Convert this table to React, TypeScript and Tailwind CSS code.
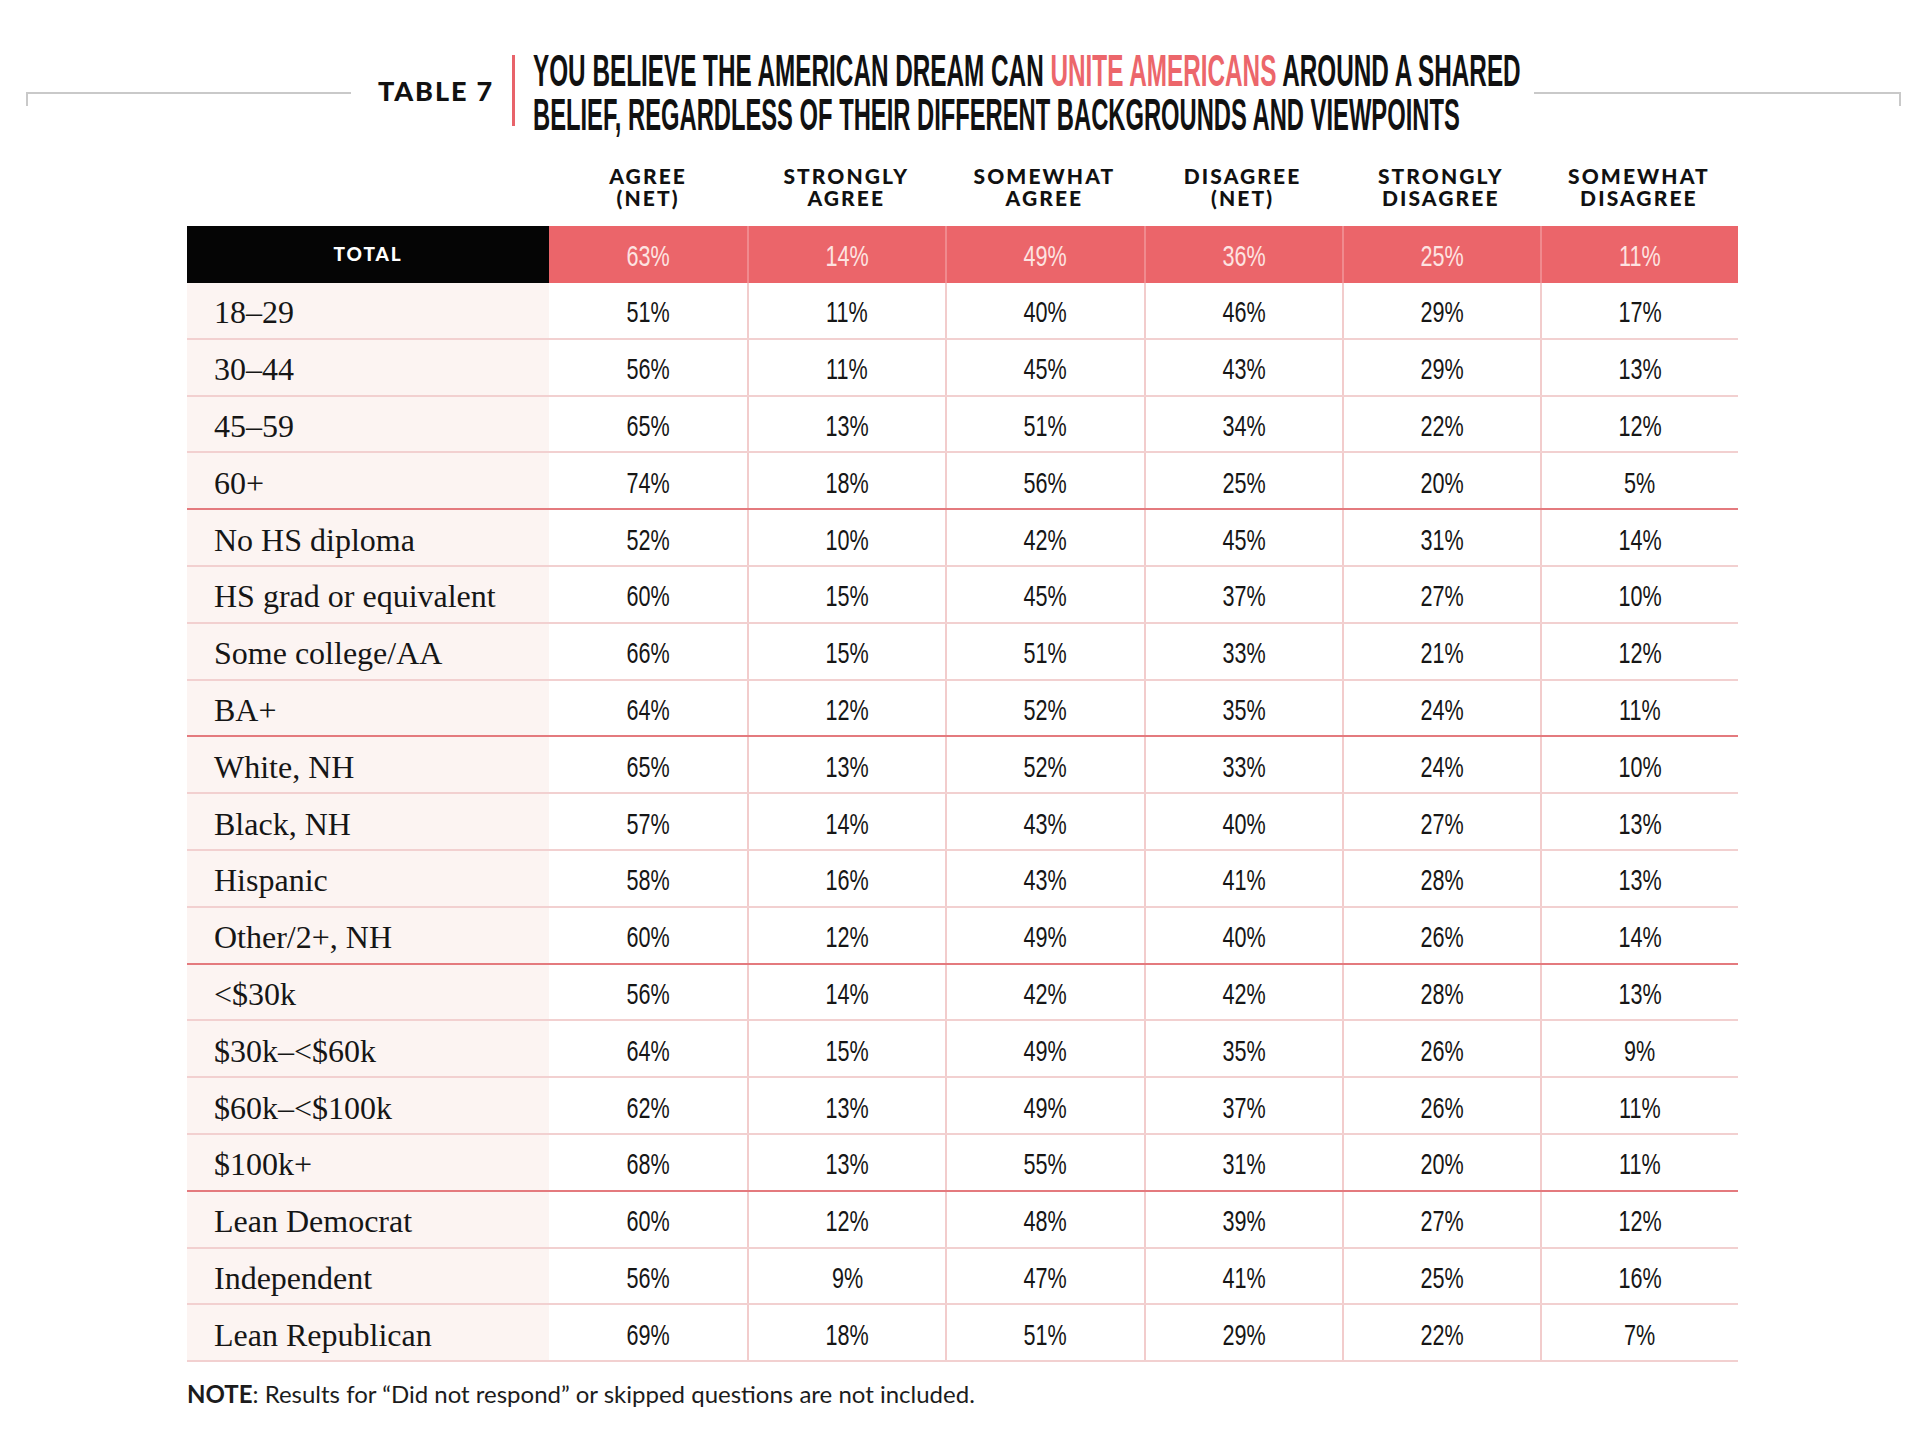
import React from 'react';

type Row = { label: string; values: number[]; groupEnd?: boolean };

const columns = [
  ['AGREE', '(NET)'],
  ['STRONGLY', 'AGREE'],
  ['SOMEWHAT', 'AGREE'],
  ['DISAGREE', '(NET)'],
  ['STRONGLY', 'DISAGREE'],
  ['SOMEWHAT', 'DISAGREE'],
];

const total = [63, 14, 49, 36, 25, 11];

const rows: Row[] = [
  { label: '18–29', values: [51, 11, 40, 46, 29, 17] },
  { label: '30–44', values: [56, 11, 45, 43, 29, 13] },
  { label: '45–59', values: [65, 13, 51, 34, 22, 12] },
  { label: '60+', values: [74, 18, 56, 25, 20, 5], groupEnd: true },
  { label: 'No HS diploma', values: [52, 10, 42, 45, 31, 14] },
  { label: 'HS grad or equivalent', values: [60, 15, 45, 37, 27, 10] },
  { label: 'Some college/AA', values: [66, 15, 51, 33, 21, 12] },
  { label: 'BA+', values: [64, 12, 52, 35, 24, 11], groupEnd: true },
  { label: 'White, NH', values: [65, 13, 52, 33, 24, 10] },
  { label: 'Black, NH', values: [57, 14, 43, 40, 27, 13] },
  { label: 'Hispanic', values: [58, 16, 43, 41, 28, 13] },
  { label: 'Other/2+, NH', values: [60, 12, 49, 40, 26, 14], groupEnd: true },
  { label: '<$30k', values: [56, 14, 42, 42, 28, 13] },
  { label: '$30k–<$60k', values: [64, 15, 49, 35, 26, 9] },
  { label: '$60k–<$100k', values: [62, 13, 49, 37, 26, 11] },
  { label: '$100k+', values: [68, 13, 55, 31, 20, 11], groupEnd: true },
  { label: 'Lean Democrat', values: [60, 12, 48, 39, 27, 12] },
  { label: 'Independent', values: [56, 9, 47, 41, 25, 16] },
  { label: 'Lean Republican', values: [69, 18, 51, 29, 22, 7] },
];

// condensed numerals: Arial metrics squeezed horizontally
const Num: React.FC<{ v: number; light?: boolean }> = ({ v, light }) => (
  <span
    className={`inline-block origin-center scale-x-[0.72] font-['Liberation_Sans',sans-serif] text-[30px] leading-none ${
      light ? 'text-[#fde3e1]' : 'text-[#161616]'
    }`}
  >
    {v}%
  </span>
);

const App: React.FC = () => {
  return (
    <div className="w-[1920px] min-h-[1455px] bg-white">
      {/* Title */}
      <div className="flex items-start pt-[50px]">
        <div className="ml-[26px] mt-[42px] w-[325px] h-[14px] border-t-2 border-l-2 border-[#c9c9c9]" />
        <div className="ml-[27px] mt-[26px] w-[115px] whitespace-nowrap font-['Lato',sans-serif] font-black text-[27px] leading-[30px] tracking-[0.07em] text-[#111]">
          TABLE 7
        </div>
        <div className="ml-[19px] mt-[5px] w-[3px] h-[71px] bg-[#e8636a]" />
        {/* tall compressed headline: small type stretched vertically */}
        <div className="ml-[18px] w-[988px] whitespace-nowrap font-['Liberation_Sans',sans-serif] font-bold text-[#111]">
          <div className="h-[43px]">
            <div className="origin-top scale-y-[1.81] text-[24.3px] leading-[24px]">
              YOU BELIEVE THE AMERICAN DREAM CAN <span className="text-[#ec666b]">UNITE AMERICANS</span> AROUND A SHARED
            </div>
          </div>
          <div className="h-[43px]">
            <div className="origin-top scale-y-[1.85] text-[23.76px] leading-[24px]">
              BELIEF, REGARDLESS OF THEIR DIFFERENT BACKGROUNDS AND VIEWPOINTS
            </div>
          </div>
        </div>
        <div className="ml-[13px] mr-[19px] mt-[42px] flex-1 h-[14px] border-t-2 border-r-2 border-[#c9c9c9]" />
      </div>

      {/* Table */}
      <div className="ml-[187px] w-[1551px]">
        <div className="mt-[29px] mb-[17px] grid grid-cols-[362px_repeat(6,1fr)]">
          <div />
          {columns.map((c, i) => (
            <div
              key={i}
              className="text-center font-['Lato',sans-serif] font-black text-[21px] leading-[22px] tracking-[0.1em] text-[#111]"
            >
              <div>{c[0]}</div>
              <div>{c[1]}</div>
            </div>
          ))}
        </div>

        {/* total row */}
        <div className="grid grid-cols-[362px_repeat(6,1fr)] h-[57px]">
          <div className="bg-[#050505] flex items-center justify-center font-['Lato',sans-serif] font-black text-[19px] tracking-[0.1em] text-white">
            TOTAL
          </div>
          {total.map((v, i) => (
            <div
              key={i}
              className={`bg-[#eb656a] flex items-center justify-center pt-[3px] ${i > 0 ? 'border-l-2 border-[#f08a8e]' : ''}`}
            >
              <Num v={v} light />
            </div>
          ))}
        </div>

        {rows.map((r) => (
          <div
            key={r.label}
            className={`grid grid-cols-[362px_repeat(6,1fr)] h-[56.8px] border-b-2 ${
              r.groupEnd ? 'border-[#e47a7e]' : 'border-[#f2d0d0]'
            }`}
          >
            <div className="bg-[#fcf4f2] flex items-center pl-[27px] pt-[4px] font-['Liberation_Serif',serif] text-[32px] text-[#161616]">
              {r.label}
            </div>
            {r.values.map((v, i) => (
              <div
                key={i}
                className={`bg-white flex items-center justify-center pt-[4px] ${i > 0 ? 'border-l-2 border-[#f2cccc]' : ''}`}
              >
                <Num v={v} />
              </div>
            ))}
          </div>
        ))}

        <p className="mt-[17px] font-['Lato',sans-serif] text-[24px] leading-[30px] text-[#1c1c1c]">
          <span className="font-bold">NOTE</span>: Results for “Did not respond” or skipped questions are not included.
        </p>
      </div>
    </div>
  );
};

export default App;
